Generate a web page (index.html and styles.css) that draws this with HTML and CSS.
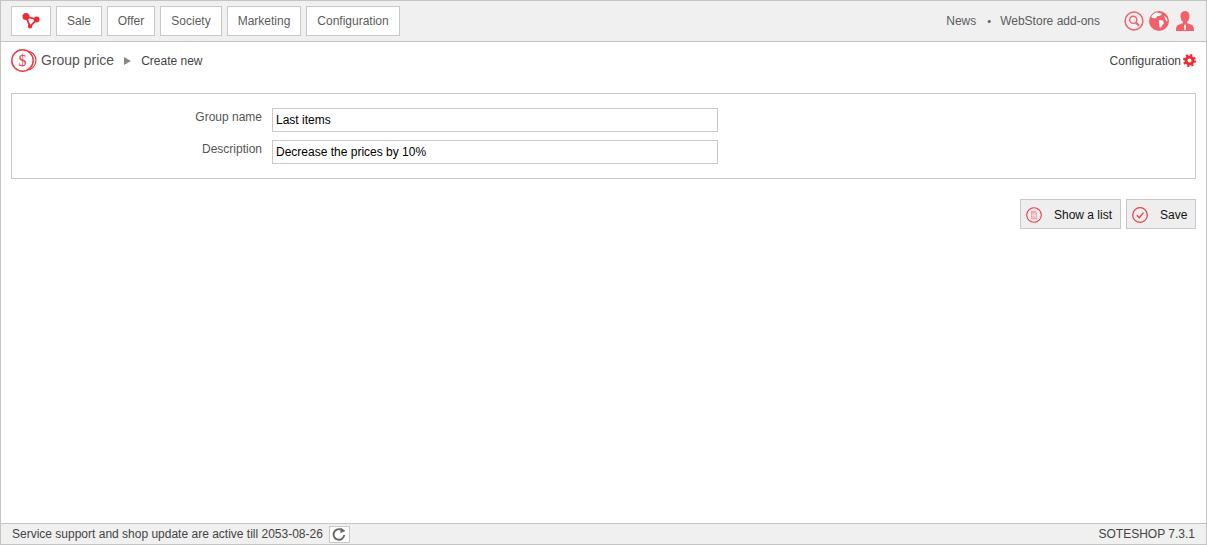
FILE: index.html
```html
<!DOCTYPE html>
<html lang="en">
<head>
<meta charset="utf-8">
<title>Group price</title>
<link rel="stylesheet" href="styles.css">
</head>
<body>
<div class="frame">
  <header class="topbar">
    <nav class="menu">
      <a class="menu-btn logo-btn"><svg width="20" height="16" viewBox="0 0 20 16"><g fill="#ee2a33"><path d="M5 3.500 L15.700 6.500 L9 13.500 Z" fill="none" stroke="#ee2a33" stroke-width="1.800"/><circle cx="5" cy="3.500" r="3.500"/><circle cx="15.700" cy="6.500" r="2.900"/><circle cx="9" cy="13.500" r="2.100"/></g></svg></a>
      <a class="menu-btn sale">Sale</a>
      <a class="menu-btn offer">Offer</a>
      <a class="menu-btn society">Society</a>
      <a class="menu-btn marketing">Marketing</a>
      <a class="menu-btn config">Configuration</a>
    </nav>
    <div class="top-right">
      <a class="top-link">News</a>
      <span class="dot">•</span>
      <a class="top-link">WebStore add-ons</a>
      <div class="top-icons">
        <svg width="20" height="20" viewBox="0 0 20 20"><circle cx="10" cy="10" r="8.900" fill="none" stroke="#f2606a" stroke-width="1.500"/><circle cx="9.200" cy="8.800" r="3.600" fill="none" stroke="#f2606a" stroke-width="1.400"/><path d="M11.800 11.500 L15 14.400" stroke="#f2606a" stroke-width="2"/></svg>
        <svg width="20" height="20" viewBox="0 0 20 20"><circle cx="10" cy="10" r="10" fill="#f2606a"/><path d="M8 1.500 C10 2.500 12 2 13 3 L11 5 L8.500 5 L7 7 L5 7.500 L2 6 C3.500 3.500 5.500 2 8 1.500Z M10 9 L14 9.500 L15 12 L12.500 15.500 L11 17 L10 13 Z M15 5 L18 7 L18.500 10.500 L16.500 9 Z" fill="#fff"/></svg>
        <svg class="ic-user" width="18" height="20" viewBox="0 0 18 20"><path d="M9 0 C12 0 13.500 2.200 13.500 5 C13.500 8 12 10.500 11 11 L11 12 L16 14 C17.500 14.700 18 16.500 18 20 L0 20 C0 16.500 .5 14.700 2 14 L7 12 L7 11 C6 10.500 4.500 8 4.500 5 C4.500 2.200 6 0 9 0Z" fill="#f2606a"/><path d="M9 13 L10 15 L9.600 19 L8.400 19 L8 15Z" fill="#fff"/></svg>
      </div>
    </div>
  </header>

  <main class="content">
    <div class="title-row">
      <div class="crumbs">
        <svg width="26" height="25" viewBox="0 0 26 25"><circle cx="15.500" cy="12.500" r="9.500" fill="none" stroke="#ee3a44" stroke-width="1.200"/><circle cx="11.500" cy="12.500" r="10.700" fill="#fff" stroke="#ee3a44" stroke-width="1.500"/><text x="11.500" y="18" text-anchor="middle" class="coin-text">$</text></svg>
        <span class="title">Group price</span>
        <span class="arrow"></span>
        <span class="sub">Create new</span>
      </div>
      <a class="config-link">Configuration<svg width="13" height="13" viewBox="0 0 24 24"><g fill="none" stroke="#ee2a33"><circle cx="12" cy="12" r="6.500" stroke-width="5.500"/><circle cx="12" cy="12" r="10" stroke-width="4" stroke-dasharray="3.930 3.930"/></g></svg></a>
    </div>

    <section class="card">
      <div class="field">
        <label class="field-label">Group name</label>
        <input class="field-input" type="text" value="Last items">
      </div>
      <div class="field">
        <label class="field-label">Description</label>
        <input class="field-input" type="text" value="Decrease the prices by 10%">
      </div>
    </section>

    <div class="actions">
      <a class="action list-action"><svg width="16" height="16" viewBox="0 0 16 16"><circle cx="8" cy="8" r="7.300" fill="none" stroke="#ee3a44" stroke-width="1.100"/><path d="M5 3.800h4.300L11 5.500v6.700H5z" fill="#f7a5aa"/><path d="M6 7h4M6 8.500h4M6 10h4" stroke="#fff" stroke-width=".7"/></svg><span>Show a list</span></a>
      <a class="action save-action"><svg width="16" height="16" viewBox="0 0 16 16"><circle cx="8" cy="8" r="7.300" fill="none" stroke="#ee3a44" stroke-width="1.200"/><path d="M4.800 8.300 L7.200 10.700 L11.500 5.600" fill="none" stroke="#ee3a44" stroke-width="1.300"/></svg><span>Save</span></a>
    </div>
  </main>

  <footer class="statusbar">
    <div class="status-left">
      <span>Service support and shop update are active till 2053-08-26</span>
      <a class="refresh"><svg width="14" height="14" viewBox="0 0 14 14"><path d="M12.200 8 A5.300 5.300 0 1 1 9 2.600" fill="none" stroke="#666" stroke-width="1.900"/><path d="M8.500 .5 L13.500 4 L8.500 6Z" fill="#666"/></svg></a>
    </div>
    <span class="version">SOTESHOP 7.3.1</span>
  </footer>
</div>
</body>
</html>
```
FILE: styles.css
```css
* { box-sizing: border-box; }
html, body { margin: 0; height: 100%; }
body { font-family: "Liberation Sans", Arial, sans-serif; font-size: 12px; color: #555; background: #fff; }
.frame { height: 545px; border: 1px solid #c4c4c4; display: flex; flex-direction: column; }
.topbar { height: 41px; flex: none; background: #f0f0f0; border-bottom: 1px solid #c4c4c4; display: flex; justify-content: space-between; align-items: flex-start; padding: 5px 12px 0 10px; }
.menu { display: flex; gap: 5px; }
.menu-btn { height: 30px; background: #fff; border: 1px solid #c8c8c8; display: flex; align-items: center; justify-content: center; color: #5c5c5c; }
.logo-btn { width: 40px; }
.sale { width: 46px; }
.offer { width: 48px; }
.society { width: 62px; }
.marketing { width: 74px; }
.config { width: 94px; }
.top-right { display: flex; align-items: center; height: 30px; color: #5c5c5c; }
.dot { margin: 0 9px 0 11px; font-size: 11px; }
.top-icons { display: flex; align-items: center; margin-left: 24px; gap: 5px; }
.ic-user { margin-left: 2px; }
.content { flex: 1; padding: 0 10px; }
.title-row { display: flex; justify-content: space-between; align-items: center; height: 37px; margin-bottom: 14px; }
.crumbs { display: flex; align-items: center; }
.coin-text { font-family: "Liberation Serif", serif; font-size: 16px; fill: #ee3a44; }
.title { font-size: 14px; color: #555; margin: 0 0 1px 4px; }
.arrow { width: 0; height: 0; border-left: 7px solid #888; border-top: 4px solid transparent; border-bottom: 4px solid transparent; margin: 1px 10px 0 10px; }
.sub { color: #444; }
.config-link { display: flex; align-items: center; color: #444; gap: 2px; }
.card { height: 86px; border: 1px solid #c8c8c8; padding: 14px 0 0; display: flex; flex-direction: column; gap: 8px; }
.field { display: flex; align-items: flex-start; }
.field-label { width: 250px; text-align: right; color: #555; margin-right: 10px; line-height: 18px; }
.field-input { width: 446px; height: 24px; border: 1px solid #c8c8c8; padding: 0 3px; margin: 0; font-family: "Liberation Sans", Arial, sans-serif; font-size: 12px; color: #000; background: #fff; }
.actions { display: flex; justify-content: flex-end; gap: 5px; margin-top: 20px; }
.action { height: 30px; background: #eee; border: 1px solid #c8c8c8; display: flex; align-items: center; color: #111; padding-top: 1px; }
.list-action { width: 101px; padding-left: 5px; gap: 12px; }
.save-action { width: 70px; padding-left: 5px; gap: 12px; }
.statusbar { height: 21px; flex: none; background: #f0f0f0; border-top: 1px solid #c4c4c4; display: flex; justify-content: space-between; align-items: center; padding: 0 11px; color: #444; }
.status-left { display: flex; align-items: center; gap: 6px; }
.refresh { width: 21px; height: 17px; background: #fff; border: 1px solid #c8c8c8; display: flex; align-items: center; justify-content: center; }
```
